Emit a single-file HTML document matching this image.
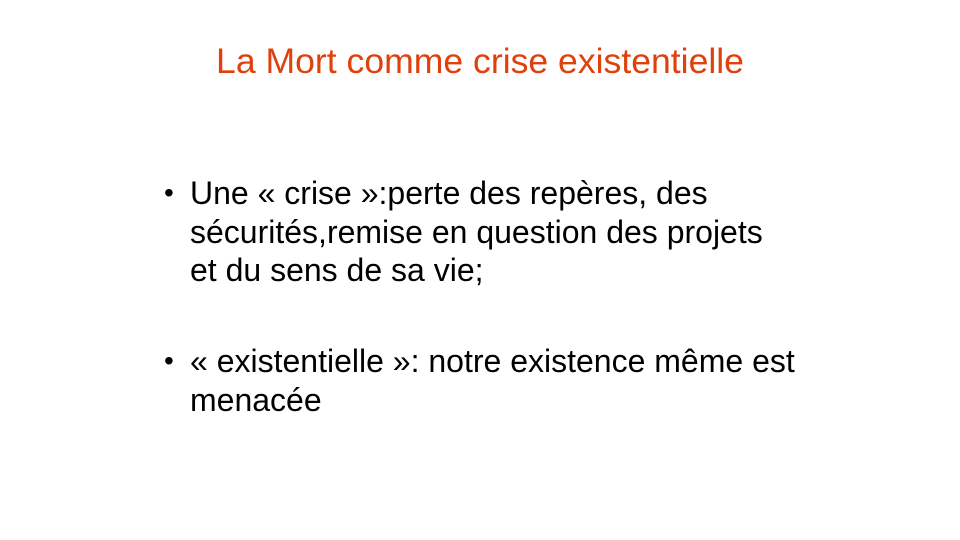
<!DOCTYPE html>
<html><head><meta charset="utf-8"><style>
body{margin:0;width:960px;height:540px;background:#fff;position:relative;overflow:hidden;font-family:"Liberation Sans",sans-serif}
.t{position:absolute;left:0;width:960px;top:41px;text-align:center;color:#e0400c;font-size:35.6px;line-height:41px}
.b{position:absolute;left:190px;font-size:32px;color:#000;line-height:38.5px;white-space:nowrap}
.d{position:absolute;left:164px;font-size:28px;line-height:38.5px}
</style></head><body>
<div class="t">La Mort comme crise existentielle</div>
<div class="d" style="top:174px">•</div>
<div class="b" style="top:174px">Une « crise »:perte des repères, des<br>sécurités,remise en question des projets<br>et du sens de sa vie;</div>
<div class="d" style="top:342px">•</div>
<div class="b" style="top:342px">« existentielle »: notre existence même est<br>menacée</div>
</body></html>
